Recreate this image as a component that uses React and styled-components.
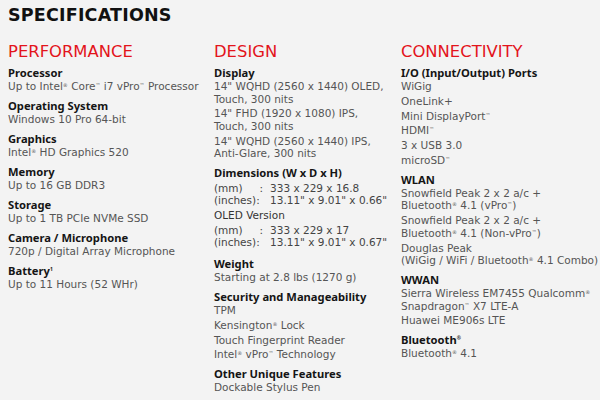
import styled, { createGlobalStyle } from 'styled-components';

const GlobalStyle = createGlobalStyle`
    html, body {
        margin: 0;
        background: #f3f3f3;
    }
    body {
        font-family: "DejaVu Sans", "Liberation Sans", sans-serif;
        color: #555;
    }
`;

const Page = styled.div`
    width: 600px;
    height: 400px;
    box-sizing: border-box;
    padding: 6px 0 0 8px;
    overflow: hidden;
`;

const Title = styled.h1`
    margin: 0;
    font-size: 17.5px;
    line-height: 18px;
    font-weight: bold;
    color: #111;
    letter-spacing: 0.2px;
`;

const Columns = styled.div`
    display: grid;
    grid-template-columns: 206px 187px 1fr;
    margin-top: 19px;
`;

const Column = styled.section`
    display: flex;
    flex-direction: column;
`;

const Heading = styled.h2`
    margin: 0 0 5px 0;
    font-size: 16.4px;
    line-height: 18px;
    font-weight: normal;
    color: #e3141b;
`;

const Group = styled.div`
    margin-top: ${p => (p.first ? 0 : 6.5)}px;
`;

const Label = styled.div`
    font-family: "Noto Sans", "DejaVu Sans", sans-serif;
    font-size: 11.2px;
    line-height: 14px;
    font-weight: bold;
    color: #151515;
`;

const Value = styled.div`
    font-size: 10.5px;
    line-height: 12.5px;
    white-space: nowrap;
    color: ${p => (p.dark ? '#333' : '#555')};

    & + & {
        margin-top: 2.3px;
    }
`;

const Sup = styled.sup`
    font-size: 5px;
    vertical-align: top;
    line-height: 8px;
    position: relative;
    top: 1px;
`;

const DimTable = styled.div`
    display: grid;
    grid-template-columns: auto auto 1fr;
    font-size: 10.5px;
    line-height: 12px;
    color: #444;
    margin: 2px 0 3px 0;
`;

const DimKey = styled.span``;

const DimColon = styled.span`
    padding-right: 7px;
`;

const R = () => <Sup>®</Sup>;
const TM = () => <Sup>™</Sup>;

const Dims = ({ mm, inches }) => (
    <DimTable>
        <DimKey>(mm)</DimKey>
        <DimColon>&nbsp;:</DimColon>
        <span>{mm}</span>
        <DimKey>(inches)</DimKey>
        <DimColon>:</DimColon>
        <span>{inches}</span>
    </DimTable>
);

export default function App() {
    return (
        <Page>
            <GlobalStyle />
            <Title>SPECIFICATIONS</Title>
            <Columns>
                <Column>
                    <Heading>PERFORMANCE</Heading>
                    <Group first>
                        <Label>Processor</Label>
                        <Value>Up to Intel<R /> Core<TM /> i7 vPro<TM /> Processor</Value>
                    </Group>
                    <Group>
                        <Label>Operating System</Label>
                        <Value>Windows 10 Pro 64-bit</Value>
                    </Group>
                    <Group>
                        <Label>Graphics</Label>
                        <Value>Intel<R /> HD Graphics 520</Value>
                    </Group>
                    <Group>
                        <Label>Memory</Label>
                        <Value>Up to 16 GB DDR3</Value>
                    </Group>
                    <Group>
                        <Label>Storage</Label>
                        <Value>Up to 1 TB PCIe NVMe SSD</Value>
                    </Group>
                    <Group>
                        <Label>Camera / Microphone</Label>
                        <Value>720p / Digital Array Microphone</Value>
                    </Group>
                    <Group>
                        <Label>Battery<Sup>1</Sup></Label>
                        <Value>Up to 11 Hours (52 WHr)</Value>
                    </Group>
                </Column>

                <Column>
                    <Heading>DESIGN</Heading>
                    <Group first>
                        <Label>Display</Label>
                        <Value>14" WQHD (2560 x 1440) OLED,<br />Touch, 300 nits</Value>
                        <Value>14" FHD (1920 x 1080) IPS,<br />Touch, 300 nits</Value>
                        <Value>14" WQHD (2560 x 1440) IPS,<br />Anti-Glare, 300 nits</Value>
                    </Group>
                    <Group>
                        <Label>Dimensions (W x D x H)</Label>
                        <Dims mm="333 x 229 x 16.8" inches={'13.11" x 9.01" x 0.66"'} />
                        <Value dark>OLED Version</Value>
                        <Dims mm="333 x 229 x 17" inches={'13.11" x 9.01" x 0.67"'} />
                    </Group>
                    <Group>
                        <Label>Weight</Label>
                        <Value>Starting at 2.8 lbs (1270 g)</Value>
                    </Group>
                    <Group>
                        <Label>Security and Manageability</Label>
                        <Value>TPM</Value>
                        <Value>Kensington<R /> Lock</Value>
                        <Value>Touch Fingerprint Reader</Value>
                        <Value>Intel<R /> vPro<TM /> Technology</Value>
                    </Group>
                    <Group>
                        <Label>Other Unique Features</Label>
                        <Value>Dockable Stylus Pen</Value>
                    </Group>
                </Column>

                <Column>
                    <Heading>CONNECTIVITY</Heading>
                    <Group first>
                        <Label>I/O (Input/Output) Ports</Label>
                        <Value>WiGig</Value>
                        <Value>OneLink+</Value>
                        <Value>Mini DisplayPort<TM /></Value>
                        <Value>HDMI<TM /></Value>
                        <Value>3 x USB 3.0</Value>
                        <Value>microSD<TM /></Value>
                    </Group>
                    <Group>
                        <Label>WLAN</Label>
                        <Value>Snowfield Peak 2 x 2 a/c +<br />Bluetooth<R /> 4.1 (vPro<TM />)</Value>
                        <Value>Snowfield Peak 2 x 2 a/c +<br />Bluetooth<R /> 4.1 (Non-vPro<TM />)</Value>
                        <Value>Douglas Peak<br />(WiGig / WiFi / Bluetooth<R /> 4.1 Combo)</Value>
                    </Group>
                    <Group>
                        <Label>WWAN</Label>
                        <Value>Sierra Wireless EM7455 Qualcomm<R /><br />Snapdragon<TM /> X7 LTE-A</Value>
                        <Value>Huawei ME906s LTE</Value>
                    </Group>
                    <Group>
                        <Label>Bluetooth<R /></Label>
                        <Value>Bluetooth<R /> 4.1</Value>
                    </Group>
                </Column>
            </Columns>
        </Page>
    );
}
